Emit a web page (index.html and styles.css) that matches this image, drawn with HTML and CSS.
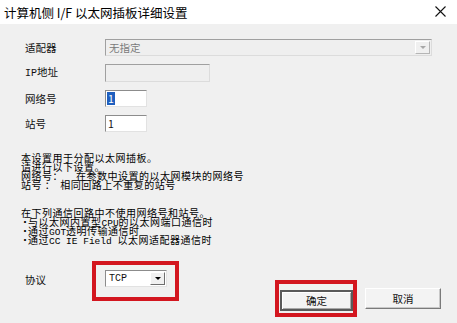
FILE: index.html
```html
<!DOCTYPE html>
<html lang="zh-CN">
<head>
    <meta charset="UTF-8">
    <title>计算机侧 I/F 以太网插板详细设置</title>
    <link rel="stylesheet" href="styles.css">
</head>
<body>
    <div class="dialog">
        <div class="titlebar">
            <span class="title">计算机侧 I/F 以太网插板详细设置</span>
            <svg class="close" width="11" height="11" viewBox="0 0 11 11">
                <path d="M0.5 0.5 L10.5 10.5 M10.5 0.5 L0.5 10.5" stroke="#111" stroke-width="1.1" fill="none"/>
            </svg>
        </div>
        <div class="content">
            <div class="fields">
                <label class="lbl">适配器</label>
                <div class="combo combo-wide disabled">
                    <span class="combo-text">无指定</span>
                    <span class="drop drop-disabled"><i class="arrow"></i></span>
                </div>

                <label class="lbl"><span class="latin">IP</span>地址</label>
                <div class="edit edit-ip disabled"></div>

                <label class="lbl">网络号</label>
                <div class="edit edit-num"><span class="sel">1</span></div>

                <label class="lbl">站号</label>
                <div class="edit edit-num"><span class="val">1</span></div>
            </div>

            <div class="note note-first">
                <div class="line">本设置用于分配以太网插板。</div>
                <div class="line">请进行以下设置。</div>
                <div class="line">网络号：<span class="gap-a"></span>在参数中设置的以太网模块的网络号</div>
                <div class="line">站号 ：<span class="gap-b"></span>相同回路上不重复的站号</div>
            </div>

            <div class="note">
                <div class="line">在下列通信回路中不使用网络号和站号。</div>
                <div class="line"><span class="dot">・</span>与以太网内置型<span class="latin">CPU</span>的以太网端口通信时</div>
                <div class="line"><span class="dot">・</span>通过<span class="latin">GOT</span>透明传输通信时</div>
                <div class="line"><span class="dot">・</span>通过<span class="latin">CC IE Field </span>以太网适配器通信时</div>
            </div>

            <div class="bottom">
                <label class="lbl lbl-proto">协议</label>
                <div class="mark mark-proto">
                    <div class="combo combo-proto">
                        <span class="combo-text">TCP</span>
                        <span class="drop"><i class="arrow"></i></span>
                    </div>
                </div>
                <div class="buttons">
                    <div class="mark mark-ok">
                        <button class="btn btn-default">确定</button>
                    </div>
                    <button class="btn">取消</button>
                </div>
            </div>
        </div>
    </div>
</body>
</html>
```

FILE: styles.css
```css
body {
    margin: 0;
    font-family: "Noto Sans CJK SC", "Noto Sans", sans-serif;
    color: #111;
}
.dialog {
    width: 457px;
    height: 323px;
    background-color: #f0f0f0;
    display: flex;
    flex-direction: column;
    overflow: hidden;
}
.titlebar {
    height: 24px;
    background-color: #fff;
    display: flex;
    align-items: center;
    padding: 0 11px 0 4px;
}
.title {
    flex: 1;
    font-size: 12.5px;
    color: #000;
}
.close {
    margin-bottom: 1px;
}
.content {
    padding: 15px 0 0 21px;
}
.fields {
    padding-left: 4px;
    display: grid;
    grid-template-columns: 80px auto;
    row-gap: 8px;
    align-items: center;
}
.lbl {
    font-size: 10.5px;
    line-height: 12px;
}
.latin {
    font-family: "Liberation Mono", monospace;
    font-size: 10px;
}
.combo,
.edit {
    box-sizing: border-box;
    height: 17px;
    border: 1px solid;
    border-color: #8c8c8c #e2e2e2 #e2e2e2 #8c8c8c;
    background-color: #fff;
    display: flex;
    align-items: center;
    font-size: 10.5px;
}
.disabled {
    background-color: #efefef;
    border-color: #a0a0a0 #dcdcdc #dcdcdc #a0a0a0;
}
.combo-wide {
    width: 327px;
}
.edit-ip {
    width: 105px;
    height: 18px;
}
.edit-num {
    width: 42px;
}
.combo-text {
    flex: 1;
    padding-left: 3px;
}
.disabled .combo-text {
    color: #7a7a7a;
}
.drop {
    box-sizing: border-box;
    width: 15px;
    height: 13px;
    margin-right: 1px;
    background-color: #f0f0f0;
    border: 1px solid;
    border-color: #fff #6e6e6e #6e6e6e #fff;
    display: flex;
    align-items: center;
    justify-content: center;
}
.drop-disabled {
    border-color: #fff #b5b5b5 #b5b5b5 #fff;
}
.arrow {
    width: 0;
    height: 0;
    border-left: 3px solid transparent;
    border-right: 3px solid transparent;
    border-top: 3px solid #000;
}
.drop-disabled .arrow {
    border-top-color: #a8a8a8;
}
.sel {
    margin-left: 1px;
    padding: 0 1px;
    background-color: #1f5fbf;
    color: #fff;
    line-height: 13px;
}
.val {
    margin-left: 2px;
}
.note {
    margin-top: 19px;
    font-size: 10px;
    letter-spacing: 0.5px;
    line-height: 9px;
    color: #000;
}
.note-first {
    margin-top: 21px;
}
.line {
    height: 9px;
    white-space: pre;
}
.note .latin {
    font-size: 9.5px;
    letter-spacing: 0;
}
.gap-a {
    display: inline-block;
    width: 13px;
}
.gap-b {
    display: inline-block;
    width: 5px;
}
.dot {
    display: inline-block;
    width: 8px;
    margin-left: -1px;
}
.bottom {
    margin-top: 17px;
    padding-left: 4px;
    display: flex;
    align-items: flex-start;
}
.lbl-proto {
    width: 67px;
    margin-top: 13px;
}
.mark {
    border: 4px solid #d3161f;
}
.mark-proto {
    width: 87px;
    box-sizing: border-box;
    padding: 5px 0 10px 9px;
}
.combo-proto {
    width: 62px;
    height: 17px;
}
.combo-proto .combo-text {
    font-family: "Liberation Mono", monospace;
    font-size: 10px;
}
.buttons {
    margin: 19px 16px 0 auto;
    display: flex;
    align-items: center;
    gap: 8px;
}
.mark-ok {
    padding: 2px 0 2px 1px;
}
.btn {
    box-sizing: border-box;
    width: 76px;
    height: 21px;
    padding: 0;
    font-family: "Noto Sans CJK SC", sans-serif;
    font-size: 10.5px;
    color: #111;
    background-color: #f3f3f3;
    border: 1px solid;
    border-color: #fff #7a7a7a #7a7a7a #fff;
    box-shadow: inset -1px -1px 0 #c8c8c8;
}
.btn-default {
    width: 73px;
    border: 2px solid #5a5a5a;
    box-shadow: inset 1px 1px 0 #fff, inset -1px -1px 0 #a8a8a8;
}
```
